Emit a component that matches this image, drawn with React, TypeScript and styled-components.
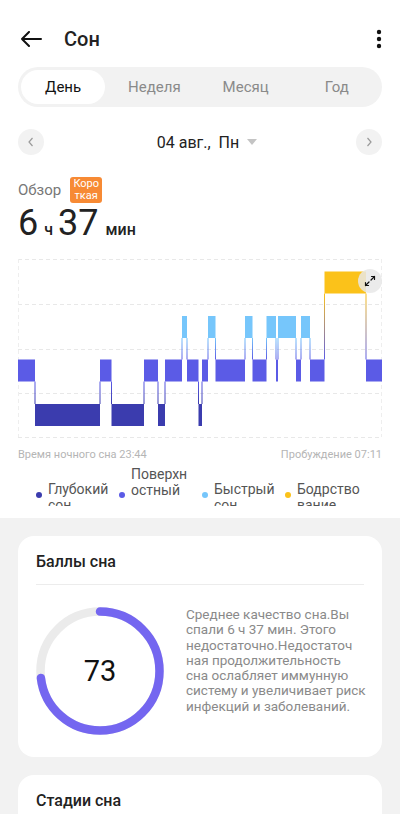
import React from 'react'
import styled, { createGlobalStyle } from 'styled-components'
import { Maximize2 } from 'lucide-react'

const GlobalStyle = createGlobalStyle`
  body {
    margin: 0;
    background: #f2f2f2;
    font-family: Roboto, 'Noto Sans', sans-serif;
    color: #222;
  }
`

const TopSection = styled.div`
  background: #fff;
  padding-bottom: 12px;
`
const Header = styled.div`
  height: 30px;
  padding: 24px 18px 0 21px;
  display: flex;
  align-items: center;
`
const Title = styled.h1`
  margin: 0 0 0 22px;
  font-size: 20px;
  font-weight: 500;
  flex: 1;
`
const IconButton = styled.button`
  border: none;
  background: none;
  padding: 0;
  display: flex;
  align-items: center;
  justify-content: center;
`
const Tabs = styled.div`
  margin: 13px 18px 0;
  height: 40px;
  box-sizing: border-box;
  padding: 3px;
  border-radius: 20px;
  background: #f2f2f2;
  display: grid;
  grid-template-columns: repeat(4, 1fr);
  column-gap: 7px;
`
const Tab = styled.div<{ $active?: boolean }>`
  border-radius: 17px;
  display: flex;
  align-items: center;
  justify-content: center;
  font-size: 15px;
  color: ${p => (p.$active ? '#111' : '#8a8a8a')};
  background: ${p => (p.$active ? '#fff' : 'transparent')};
`
const DateRow = styled.div`
  margin-top: 22px;
  padding: 0 18px;
  height: 26px;
  display: flex;
  align-items: center;
  justify-content: space-between;
`
const RoundButton = styled.div`
  width: 26px;
  height: 26px;
  border-radius: 50%;
  background: #f2f2f2;
  display: flex;
  align-items: center;
  justify-content: center;
`
const DateLabel = styled.div`
  display: flex;
  align-items: center;
  gap: 8px;
  font-size: 16px;
  color: #222;
  margin-left: 14px;
`
const Triangle = styled.span`
  width: 0;
  height: 0;
  border-left: 5px solid transparent;
  border-right: 5px solid transparent;
  border-top: 6px solid #c4c4c4;
`
const OverviewRow = styled.div`
  margin-top: 22px;
  padding: 0 18px;
  display: flex;
  align-items: center;
  gap: 9px;
`
const OverviewLabel = styled.span`
  font-size: 15px;
  color: #777;
`
const Badge = styled.span`
  width: 32px;
  height: 26px;
  box-sizing: border-box;
  border-radius: 3px;
  background: #f78a34;
  color: #fff;
  font-size: 11px;
  line-height: 12.5px;
  text-align: center;
  padding-top: 0.5px;
`
const Duration = styled.div`
  padding: 0 18px;
  height: 40px;
  display: flex;
  align-items: baseline;
  color: #222;
`
const BigNumber = styled.span`
  font-size: 36px;
  line-height: 40px;
  font-weight: 400;
`
const Unit = styled.span<{ $gap?: number }>`
  font-size: 16px;
  font-weight: 500;
  margin: 0 5px 0 ${p => p.$gap ?? 5}px;
`
const ChartWrap = styled.div`
  position: relative;
  margin: 13px 18px 0;
  height: 184px;
`
const ExpandButton = styled.div`
  position: absolute;
  left: 340px;
  top: 13px;
  width: 24px;
  height: 24px;
  border-radius: 50%;
  background: rgba(232, 232, 232, 0.85);
  display: flex;
  align-items: center;
  justify-content: center;
`
const TimeRow = styled.div`
  margin-top: 8px;
  padding: 0 18px;
  display: flex;
  justify-content: space-between;
  font-size: 11px;
  line-height: 14px;
  color: #b5b5b5;
`
const Legend = styled.div`
  height: 44px;
  overflow: hidden;
  padding-left: 36px;
  display: grid;
  grid-template-columns: repeat(4, 83px);
`
const LegendItem = styled.div`
  display: flex;
  align-items: flex-start;
`
const Dot = styled.span<{ $color: string }>`
  width: 6px;
  height: 6px;
  border-radius: 50%;
  margin-top: 30px;
  flex: none;
  background: ${p => p.$color};
`
const LegendText = styled.div<{ $lift?: boolean }>`
  margin-left: 6px;
  padding-top: ${p => (p.$lift ? '4px' : '19px')};
  font-size: 14px;
  line-height: 16px;
  color: #555;
  white-space: nowrap;
`
const Card = styled.div`
  margin: 18px 18px 0;
  background: #fff;
  border-radius: 16px;
  padding: 16px 18px 22px;
`
const CardTitle = styled.div`
  font-size: 16px;
  line-height: 20px;
  font-weight: 500;
  color: #222;
`
const Divider = styled.div`
  margin-top: 12px;
  height: 1px;
  background: #ececec;
`
const ScoreRow = styled.div`
  margin-top: 22px;
  display: flex;
  align-items: flex-start;
  gap: 22px;
`
const Ring = styled.div`
  position: relative;
  width: 128px;
  height: 128px;
  flex: none;
`
const RingValue = styled.div`
  position: absolute;
  inset: 0;
  display: flex;
  align-items: center;
  justify-content: center;
  font-size: 29px;
  color: #111;
`
const Description = styled.div`
  font-size: 13.5px;
  line-height: 15.3px;
  color: #8a8a8a;
  white-space: nowrap;
`

const COLORS = {
  awake: '#fbc21a',
  rem: '#76c6fb',
  core: '#5b5be6',
  deep: '#3b3cae',
}
type Level = keyof typeof COLORS
const LEVEL_TOP: Record<Level, number> = { awake: 15.5, rem: 60, core: 103.5, deep: 148 }
const BAR_H = 22

// absolute x positions on screen, chart starts at 18
const SEGMENTS: [Level, number, number][] = [
  ['core', 18, 35],
  ['deep', 35, 100],
  ['core', 100, 111.5],
  ['deep', 111.5, 144],
  ['core', 144, 158],
  ['deep', 158, 165],
  ['core', 165, 182],
  ['rem', 182, 187],
  ['core', 187, 198.5],
  ['deep', 198.5, 202],
  ['core', 202, 208],
  ['rem', 208, 215.5],
  ['core', 215.5, 245],
  ['rem', 245, 252.5],
  ['core', 252.5, 266.5],
  ['rem', 266.5, 276],
  ['core', 276, 278],
  ['rem', 278, 296],
  ['core', 296, 301],
  ['rem', 301, 310],
  ['core', 310, 324.5],
  ['awake', 324.5, 366],
  ['core', 366, 382],
]

const GRID_Y = [3, 48, 93, 137, 181]

const SleepChart: React.FC = () => {
  const connectors = SEGMENTS.slice(1).map((seg, i) => {
    const prev = SEGMENTS[i]
    const a = LEVEL_TOP[prev[0]]
    const b = LEVEL_TOP[seg[0]]
    const upper = a < b ? prev[0] : seg[0]
    const lower = a < b ? seg[0] : prev[0]
    const y1 = Math.min(a, b) + BAR_H
    const y2 = Math.max(a, b)
    return { x: seg[1] - 18 - 0.5, y1, y2, id: `g-${upper}-${lower}` }
  })
  const pairs = Array.from(new Set(connectors.map(c => c.id)))

  return (
    <svg width="364" height="184" viewBox="0 0 364 184">
      <defs>
        {pairs.map(id => {
          const [, up, low] = id.split('-') as [string, Level, Level]
          return (
            <linearGradient key={id} id={id} x1="0" y1="0" x2="0" y2="1">
              <stop offset="0" stopColor={COLORS[up]} />
              <stop offset="1" stopColor={COLORS[low]} />
            </linearGradient>
          )
        })}
      </defs>
      {GRID_Y.map(y => (
        <line key={y} x1="0" x2="364" y1={y + 0.5} y2={y + 0.5} stroke="#e8e8e8" strokeDasharray="4 3" />
      ))}
      <line x1="0.5" x2="0.5" y1="3" y2="181" stroke="#eeeeee" strokeDasharray="4 3" />
      <line x1="363.5" x2="363.5" y1="3" y2="181" stroke="#eeeeee" strokeDasharray="4 3" />
      {connectors.map((c, i) => (
        <rect key={i} x={c.x} y={c.y1} width="1" height={c.y2 - c.y1} fill={`url(#${c.id})`} />
      ))}
      {SEGMENTS.map(([lvl, x1, x2], i) => (
        <rect key={i} x={x1 - 18} y={LEVEL_TOP[lvl]} width={x2 - x1} height={BAR_H} fill={COLORS[lvl]} />
      ))}
    </svg>
  )
}

const ScoreRing: React.FC<{ value: number }> = ({ value }) => {
  const r = 59.5
  const len = 2 * Math.PI * r
  return (
    <Ring>
      <svg width="128" height="128" viewBox="0 0 128 128">
        <circle cx="64" cy="64" r={r} fill="none" stroke="#ebebeb" strokeWidth="8.5" />
        <circle
          cx="64"
          cy="64"
          r={r}
          fill="none"
          stroke="#7466f0"
          strokeWidth="8.5"
          strokeLinecap="round"
          strokeDasharray={`${(len * value) / 100} ${len}`}
          transform="rotate(-90 64 64)"
        />
      </svg>
      <RingValue>{value}</RingValue>
    </Ring>
  )
}

const descriptionLines = [
  'Среднее качество сна.Вы',
  'спали 6 ч 37 мин. Этого',
  'недостаточно.Недостаточ',
  'ная продолжительность',
  'сна ослабляет иммунную',
  'систему и увеличивает риск',
  'инфекций и заболеваний.',
]

const App: React.FC = () => {
  return (
    <>
      <GlobalStyle />
      <TopSection>
        <Header>
          <IconButton aria-label="Назад">
            <svg width="21" height="16" viewBox="0 0 21 16">
              <path d="M1 8 H20 M8 1 L1 8 L8 15" fill="none" stroke="#111" strokeWidth="2" strokeLinecap="round" strokeLinejoin="round" />
            </svg>
          </IconButton>
          <Title>Сон</Title>
          <IconButton aria-label="Меню">
            <svg width="6" height="20" viewBox="0 0 6 20">
              <circle cx="3" cy="3" r="2.2" fill="#111" />
              <circle cx="3" cy="10" r="2.2" fill="#111" />
              <circle cx="3" cy="17" r="2.2" fill="#111" />
            </svg>
          </IconButton>
        </Header>

        <Tabs>
          <Tab $active>День</Tab>
          <Tab>Неделя</Tab>
          <Tab>Месяц</Tab>
          <Tab>Год</Tab>
        </Tabs>

        <DateRow>
          <RoundButton>
            <svg width="8" height="10" viewBox="0 0 8 10">
              <path d="M5.5 1 L2 5 L5.5 9" fill="none" stroke="#9a9a9a" strokeWidth="1.2" />
            </svg>
          </RoundButton>
          <DateLabel>
            04 авг.,&nbsp; Пн
            <Triangle />
          </DateLabel>
          <RoundButton>
            <svg width="8" height="10" viewBox="0 0 8 10">
              <path d="M2.5 1 L6 5 L2.5 9" fill="none" stroke="#9a9a9a" strokeWidth="1.2" />
            </svg>
          </RoundButton>
        </DateRow>

        <OverviewRow>
          <OverviewLabel>Обзор</OverviewLabel>
          <Badge>
            Коро
            <br />
            ткая
          </Badge>
        </OverviewRow>
        <Duration>
          <BigNumber>6</BigNumber>
          <Unit $gap={6}>ч</Unit>
          <BigNumber>37</BigNumber>
          <Unit $gap={7}>мин</Unit>
        </Duration>

        <ChartWrap>
          <SleepChart />
          <ExpandButton>
            <Maximize2 size={12} strokeWidth={2.4} color="#111" />
          </ExpandButton>
        </ChartWrap>

        <TimeRow>
          <span>Время ночного сна 23:44</span>
          <span>Пробуждение 07:11</span>
        </TimeRow>

        <Legend>
          <LegendItem>
            <Dot $color={COLORS.deep} />
            <LegendText>Глубокий<br />сон</LegendText>
          </LegendItem>
          <LegendItem>
            <Dot $color={COLORS.core} />
            <LegendText $lift>Поверхн<br />остный</LegendText>
          </LegendItem>
          <LegendItem>
            <Dot $color={COLORS.rem} />
            <LegendText>Быстрый<br />сон</LegendText>
          </LegendItem>
          <LegendItem>
            <Dot $color={COLORS.awake} />
            <LegendText>Бодрство<br />вание</LegendText>
          </LegendItem>
        </Legend>
      </TopSection>

      <Card>
        <CardTitle>Баллы сна</CardTitle>
        <Divider />
        <ScoreRow>
          <ScoreRing value={73} />
          <Description>
            {descriptionLines.map((line, i) => (
              <div key={i}>{line}</div>
            ))}
          </Description>
        </ScoreRow>
      </Card>

      <Card>
        <CardTitle>Стадии сна</CardTitle>
        <Divider />
      </Card>
    </>
  )
}

export default App
